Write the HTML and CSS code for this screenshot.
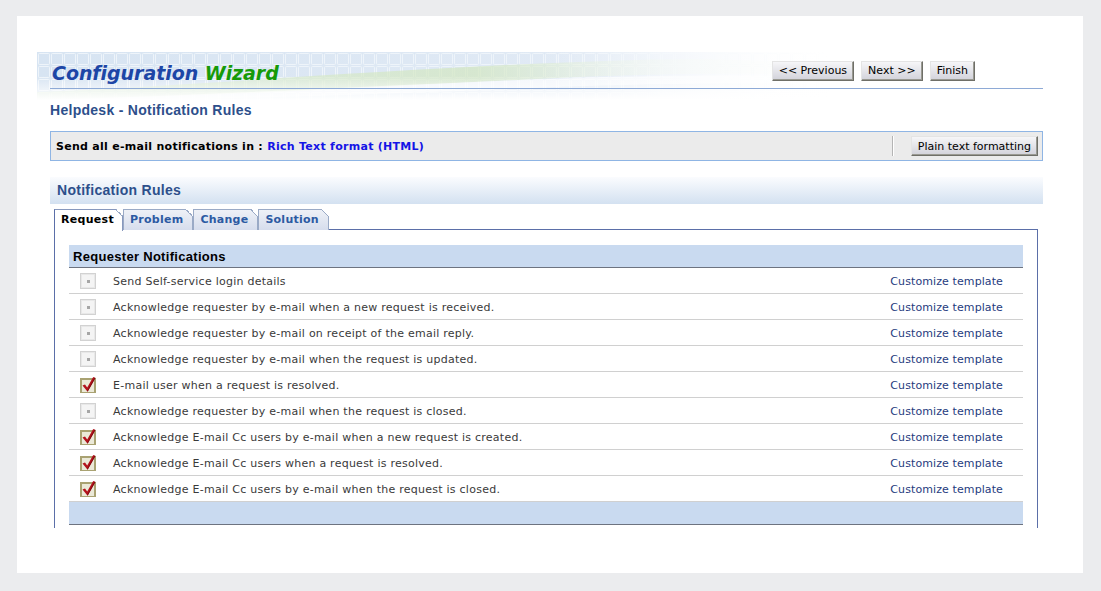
FILE: index.html
```html
<!DOCTYPE html>
<html lang="en">
<head>
    <meta charset="UTF-8">
    <title>Configuration Wizard - Notification Rules</title>
    <link rel="stylesheet" href="styles.css">
</head>
<body>
    <svg class="defs" width="0" height="0">
        <symbol id="cb-off" viewBox="0 0 16 16">
            <rect x="0.5" y="0.5" width="15" height="15" fill="#f4f4f4" stroke="#d2d2d2"/>
            <rect x="1.5" y="1.5" width="13" height="13" fill="none" stroke="#e8e8e8"/>
            <rect x="7" y="7" width="3" height="3" fill="#a6a6a6"/>
        </symbol>
        <symbol id="cb-on" viewBox="0 0 16 16">
            <rect x="1" y="2" width="14" height="14" fill="#ebe9d8" stroke="#a9a272" stroke-width="2"/>
            <path d="M2.5 8.5 L5 7.5 L7.2 10.6 L13.2 0 L15.4 1 L7.6 14.8 Z" fill="#b4121c"/>
            <path d="M7.6 14.8 L15.4 1 L14.6 0.6 L7.4 13.6 Z" fill="#7c0a10"/>
        </symbol>
    </svg>

    <div class="page">
        <div class="wizard-head">
            <svg class="banner" width="1006" height="48" viewBox="0 0 1006 48" preserveAspectRatio="none">
                <defs>
                    <linearGradient id="bgFade" x1="0" x2="1" y1="0" y2="0">
                        <stop offset="0" stop-color="#d7e4f2"/>
                        <stop offset="0.55" stop-color="#e1eaf5"/>
                        <stop offset="0.79" stop-color="#ffffff"/>
                    </linearGradient>
                    <pattern id="grid" width="13" height="13" patternUnits="userSpaceOnUse">
                        <rect x="1.5" y="1.5" width="11" height="11" rx="1" fill="none" stroke="#eef4fa"/>
                    </pattern>
                    <linearGradient id="rightFade" x1="0" x2="1" y1="0" y2="0">
                        <stop offset="0.5" stop-color="#fff" stop-opacity="0"/>
                        <stop offset="0.79" stop-color="#fff" stop-opacity="1"/>
                    </linearGradient>
                    <linearGradient id="downFade" x1="0" x2="0" y1="0" y2="1">
                        <stop offset="0.5" stop-color="#fff" stop-opacity="0"/>
                        <stop offset="1" stop-color="#fff" stop-opacity="1"/>
                    </linearGradient>
                    <linearGradient id="green" x1="0" x2="1" y1="0" y2="0">
                        <stop offset="0" stop-color="#dcedcf" stop-opacity="0.6"/>
                        <stop offset="0.55" stop-color="#d2e6c0" stop-opacity="0.7"/>
                        <stop offset="0.8" stop-color="#eef6e8" stop-opacity="0.3"/>
                    </linearGradient>
                </defs>
                <rect width="1006" height="48" fill="url(#bgFade)"/>
                <rect width="1006" height="48" fill="url(#grid)"/>
                <path d="M0 40 C160 34 380 14 600 8 C680 6 740 9 800 13 L800 24 C700 20 600 22 500 27 C330 35 150 46 0 48 Z" fill="url(#green)"/>
                <path d="M0 48 C160 44 360 32 540 26 C640 23 720 23 800 25 L800 32 C700 30 600 32 520 35 C380 41 220 46 120 48 Z" fill="#fff" opacity="0.6"/>
                <rect width="1006" height="48" fill="url(#rightFade)"/>
                <rect width="1006" height="48" fill="url(#downFade)"/>
            </svg>
            <div class="wizard-bar">
                <h1 class="wizard-title">Configuration <span>Wizard</span></h1>
                <div class="wizard-nav">
                    <button class="btn">&lt;&lt; Previous</button>
                    <button class="btn">Next &gt;&gt;</button>
                    <button class="btn">Finish</button>
                </div>
            </div>
        </div>

        <div class="content">
            <h2 class="page-title">Helpdesk - Notification Rules</h2>

            <div class="format-bar">
                <div class="format-text">Send all e-mail notifications in : <span class="format-value">Rich Text format (HTML)</span></div>
                <div class="format-action">
                    <span class="sep"></span>
                    <button class="btn">Plain text formatting</button>
                </div>
            </div>

            <div class="section-head">Notification Rules</div>

            <div class="tabs">
                <div class="tab active">Request</div>
                <div class="tab">Problem</div>
                <div class="tab">Change</div>
                <div class="tab">Solution</div>
            </div>

            <div class="tab-panel">
                <table class="rules">
                    <thead>
                        <tr><th colspan="3">Requester Notifications</th></tr>
                    </thead>
                    <tbody>
                        <tr><td class="chk"><svg class="cb"><use href="#cb-off"/></svg></td><td>Send Self-service login details</td><td class="tpl"><a href="#">Customize template</a></td></tr>
                        <tr><td class="chk"><svg class="cb"><use href="#cb-off"/></svg></td><td>Acknowledge requester by e-mail when a new request is received.</td><td class="tpl"><a href="#">Customize template</a></td></tr>
                        <tr><td class="chk"><svg class="cb"><use href="#cb-off"/></svg></td><td>Acknowledge requester by e-mail on receipt of the email reply.</td><td class="tpl"><a href="#">Customize template</a></td></tr>
                        <tr><td class="chk"><svg class="cb"><use href="#cb-off"/></svg></td><td>Acknowledge requester by e-mail when the request is updated.</td><td class="tpl"><a href="#">Customize template</a></td></tr>
                        <tr><td class="chk"><svg class="cb"><use href="#cb-on"/></svg></td><td>E-mail user when a request is resolved.</td><td class="tpl"><a href="#">Customize template</a></td></tr>
                        <tr><td class="chk"><svg class="cb"><use href="#cb-off"/></svg></td><td>Acknowledge requester by e-mail when the request is closed.</td><td class="tpl"><a href="#">Customize template</a></td></tr>
                        <tr><td class="chk"><svg class="cb"><use href="#cb-on"/></svg></td><td>Acknowledge E-mail Cc users by e-mail when a new request is created.</td><td class="tpl"><a href="#">Customize template</a></td></tr>
                        <tr><td class="chk"><svg class="cb"><use href="#cb-on"/></svg></td><td>Acknowledge E-mail Cc users when a request is resolved.</td><td class="tpl"><a href="#">Customize template</a></td></tr>
                        <tr><td class="chk"><svg class="cb"><use href="#cb-on"/></svg></td><td>Acknowledge E-mail Cc users by e-mail when the request is closed.</td><td class="tpl"><a href="#">Customize template</a></td></tr>
                    </tbody>
                    <tfoot>
                        <tr><td colspan="3"></td></tr>
                    </tfoot>
                </table>
            </div>
        </div>
    </div>
</body>
</html>
```

FILE: styles.css
```css
body {
    margin: 0;
    padding: 16px 18px 18px 17px;
    background: #ebecee;
    font-family: "DejaVu Sans", Verdana, sans-serif;
    font-size: 11px;
    color: #333;
}
.defs {
    position: absolute;
}
.page {
    background: #fff;
    height: 557px;
    box-sizing: border-box;
    padding: 36px 40px 0 20px;
}
.wizard-head {
    position: relative;
    height: 48px;
}
.banner {
    position: absolute;
    left: 0;
    top: 0;
    display: block;
}
.wizard-bar {
    position: relative;
    height: 36px;
    margin-left: 13px;
    border-bottom: 1px solid #8eaad6;
    display: flex;
    align-items: center;
    justify-content: space-between;
}
.wizard-title {
    margin: 5px 0 0 2px;
    font-size: 19px;
    font-style: italic;
    font-weight: bold;
    color: #1d46a6;
    letter-spacing: -0.05px;
}
.wizard-title span {
    color: #169a08;
}
.wizard-nav {
    display: flex;
    gap: 7px;
    margin-right: 68px;
    margin-top: 1px;
}
.btn {
    height: 20px;
    padding: 0 6px;
    font-family: "DejaVu Sans", Verdana, sans-serif;
    font-size: 11px;
    color: #000;
    background: linear-gradient(#f6f6f8, #d2d2da);
    border: 1px solid;
    border-color: #e4e4e4 #6f6f68 #6f6f68 #e4e4e4;
    box-shadow: inset -1px -1px 0 #9a9a92;
    cursor: pointer;
}
.content {
    margin-left: 13px;
}
.page-title {
    margin: 0;
    height: 20px;
    line-height: 20px;
    font-family: "Liberation Sans", Arial, sans-serif;
    font-size: 14px;
    letter-spacing: 0.28px;
    font-weight: bold;
    color: #2d4f8b;
}
.format-bar {
    margin-top: 11px;
    height: 28px;
    border: 1px solid #8fb5e4;
    background: #ebebeb;
    display: flex;
    align-items: center;
    justify-content: space-between;
    padding: 0 4px 0 5px;
}
.format-text {
    font-weight: bold;
    letter-spacing: 0.28px;
    color: #000;
}
.format-value {
    color: #1414e6;
}
.format-action {
    display: flex;
    align-items: center;
    gap: 17px;
}
.sep {
    width: 1px;
    height: 20px;
    background: #b4b4b4;
    border-right: 1px solid #fff;
}
.section-head {
    margin-top: 16px;
    height: 27px;
    line-height: 27px;
    padding-left: 7px;
    background: linear-gradient(#fbfcfe, #d3e1f1);
    font-family: "Liberation Sans", Arial, sans-serif;
    font-size: 14px;
    letter-spacing: 0.28px;
    font-weight: bold;
    color: #2d4f8b;
}
.tabs {
    margin: 5px 0 0 4px;
    display: flex;
    height: 21px;
}
.tab {
    position: relative;
    height: 20px;
    line-height: 20px;
    padding: 0 9px 0 6px;
    border: 1px solid #9aaac6;
    border-bottom: none;
    background: linear-gradient(#eef1f7, #d6dded);
    font-weight: bold;
    letter-spacing: 0.25px;
    color: #2c5aa2;
}
.tab::after {
    content: "";
    position: absolute;
    top: -1px;
    right: -1px;
    width: 7px;
    height: 7px;
    background: linear-gradient(225deg, #fff 0 50%, #9aaac6 50% calc(50% + 1px), transparent calc(50% + 1px));
}
.tab.active {
    z-index: 1;
    height: 21px;
    padding: 0 8px 0 6px;
    letter-spacing: 0.3px;
    background: #fff;
    color: #000;
    border-color: #8798bd;
    border-left-color: #5b6fa8;
}
.tab-panel {
    margin: 0 5px 0 4px;
    border: 1px solid #5b6fa8;
    border-bottom: none;
    padding: 15px 14px 3px 14px;
    margin-top: -1px;
}
.rules {
    width: 100%;
    border-collapse: collapse;
}
.rules th {
    height: 22px;
    padding: 0 0 0 4px;
    text-align: left;
    background: #c9daf0;
    border-bottom: 1px solid #6d7380;
    font-family: "Liberation Sans", Arial, sans-serif;
    font-size: 13px;
    letter-spacing: 0.3px;
    font-weight: bold;
    color: #000;
}
.rules td {
    height: 24px;
    padding: 1px 0 0;
    border-bottom: 1px solid #d0d0d0;
    color: #3a3a3a;
    letter-spacing: 0.25px;
}
.rules td.chk {
    width: 33px;
    padding-left: 11px;
}
.cb {
    display: block;
    width: 16px;
    height: 16px;
}
.rules td.tpl {
    text-align: right;
    padding-right: 20px;
    letter-spacing: 0.1px;
}
.rules td.tpl a {
    color: #1f3c7e;
    text-decoration: none;
}
.rules tfoot td {
    height: 22px;
    padding: 0;
    background: #c9daf0;
    border-bottom: 1px solid #6d7380;
}
```
